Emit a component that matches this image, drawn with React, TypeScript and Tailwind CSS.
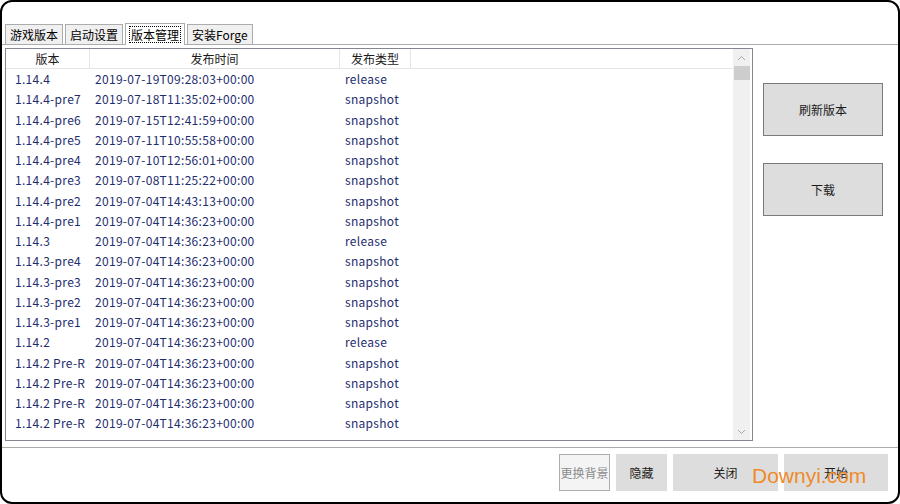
import React from "react";

const FONT = "font-['Microsoft_YaHei','Noto_Sans_CJK_SC',sans-serif]";

const ROWS: [string, string, string][] = [
  ["1.14.4", "2019-07-19T09:28:03+00:00", "release"],
  ["1.14.4-pre7", "2019-07-18T11:35:02+00:00", "snapshot"],
  ["1.14.4-pre6", "2019-07-15T12:41:59+00:00", "snapshot"],
  ["1.14.4-pre5", "2019-07-11T10:55:58+00:00", "snapshot"],
  ["1.14.4-pre4", "2019-07-10T12:56:01+00:00", "snapshot"],
  ["1.14.4-pre3", "2019-07-08T11:25:22+00:00", "snapshot"],
  ["1.14.4-pre2", "2019-07-04T14:43:13+00:00", "snapshot"],
  ["1.14.4-pre1", "2019-07-04T14:36:23+00:00", "snapshot"],
  ["1.14.3", "2019-07-04T14:36:23+00:00", "release"],
  ["1.14.3-pre4", "2019-07-04T14:36:23+00:00", "snapshot"],
  ["1.14.3-pre3", "2019-07-04T14:36:23+00:00", "snapshot"],
  ["1.14.3-pre2", "2019-07-04T14:36:23+00:00", "snapshot"],
  ["1.14.3-pre1", "2019-07-04T14:36:23+00:00", "snapshot"],
  ["1.14.2", "2019-07-04T14:36:23+00:00", "release"],
  ["1.14.2 Pre-R", "2019-07-04T14:36:23+00:00", "snapshot"],
  ["1.14.2 Pre-R", "2019-07-04T14:36:23+00:00", "snapshot"],
  ["1.14.2 Pre-R", "2019-07-04T14:36:23+00:00", "snapshot"],
  ["1.14.2 Pre-R", "2019-07-04T14:36:23+00:00", "snapshot"],
];

const TABS = ["游戏版本", "启动设置", "版本管理", "安装Forge"];

function Chevron({ up }: { up?: boolean }) {
  return (
    <svg width="9" height="6" viewBox="0 0 9 6" className="block">
      <path d={up ? "M1 5 L4.5 1.5 L8 5" : "M1 1 L4.5 4.5 L8 1"} fill="none" stroke="#a6a6a6" strokeWidth="1" />
    </svg>
  );
}

export default function App() {
  return (
    <div className={`${FONT} w-[900px] h-[504px] bg-white`}>
      <div className="w-full h-full border-2 border-black rounded-[12px] overflow-hidden flex flex-col bg-white text-[12px]">
        {/* tabs */}
        <div className="flex items-end pl-[3px] pt-[20px] h-[42px] gap-[2px]">
          {TABS.map((t, i) =>
            i === 2 ? (
              <div key={t} className="h-[22px] px-[3px] flex items-center bg-white border border-b-0 border-[#acacac] -mb-px relative z-10">
                <span className="border border-dotted border-black px-[1px] leading-[15px]">{t}</span>
              </div>
            ) : (
              <div key={t} className="h-[20px] px-[4px] flex items-center bg-[#f0f0f0] border border-b-0 border-[#acacac] text-[#000]">
                {t}
              </div>
            )
          )}
        </div>

        {/* panel */}
        <div className="h-[404px] border-t border-b border-[#acacac] flex">
          <div className="ml-[3px] mt-[3px] w-[748px] h-[393px] border border-[#828790] flex">
            <div className="flex-1 flex flex-col">
              <div className="h-[20px] flex border-b border-[#e5e5e5] text-[#1a1a1a]">
                <div className="w-[84px] border-r border-[#e5e5e5] flex items-center justify-center">版本</div>
                <div className="w-[250px] border-r border-[#e5e5e5] flex items-center justify-center">发布时间</div>
                <div className="w-[71px] border-r border-[#e5e5e5] flex items-center justify-center">发布类型</div>
              </div>
              <div className="flex-1 text-[#1e2d6e] tracking-[0.3px]">
                {ROWS.map((r, i) => (
                  <div key={i} className="h-[20.25px] flex items-center">
                    <span className="w-[84px] pl-[9px] whitespace-nowrap overflow-hidden">{r[0]}</span>
                    <span className="w-[250px] pl-[5px]">{r[1]}</span>
                    <span className="pl-[5px]">{r[2]}</span>
                  </div>
                ))}
              </div>
            </div>
            <div className="w-[17px] bg-[#f0f0f0] flex flex-col items-center mr-[2px]">
              <div className="h-[17px] flex items-center justify-center"><Chevron up /></div>
              <div className="w-[16px] h-[14px] bg-[#cdcdcd]" />
              <div className="flex-1" />
              <div className="h-[17px] flex items-center justify-center"><Chevron /></div>
            </div>
          </div>
          <div className="ml-[10px] flex flex-col">
            <button className="mt-[38px] w-[120px] h-[53px] bg-[#dddddd] border border-[#7a7a7a] text-[#1a1a1a]">刷新版本</button>
            <button className="mt-[27px] w-[120px] h-[53px] bg-[#dddddd] border border-[#7a7a7a] text-[#1a1a1a]">下载</button>
          </div>
        </div>

        {/* bottom */}
        <div className="flex-1 relative">
          <div className="absolute left-[557px] top-[6px] flex gap-[6px]">
            <button className="w-[51px] h-[37px] bg-[#f4f4f4] border border-[#adadad] text-[#8c8c8c] text-[12px]">更换背景</button>
            <button className="w-[51px] h-[37px] bg-[#dddddd] text-[#1a1a1a]">隐藏</button>
            <button className="w-[105px] h-[37px] bg-[#dddddd] text-[#1a1a1a]">关闭</button>
            <button className="w-[104px] h-[37px] bg-[#dddddd] text-[#1a1a1a]">开始</button>
          </div>
          <div className="absolute left-[750px] top-[16px] text-[21px] leading-[24px] text-[#f08a2a] font-['Liberation_Sans',sans-serif]">
            Downyi.com
          </div>
        </div>
      </div>
    </div>
  );
}
